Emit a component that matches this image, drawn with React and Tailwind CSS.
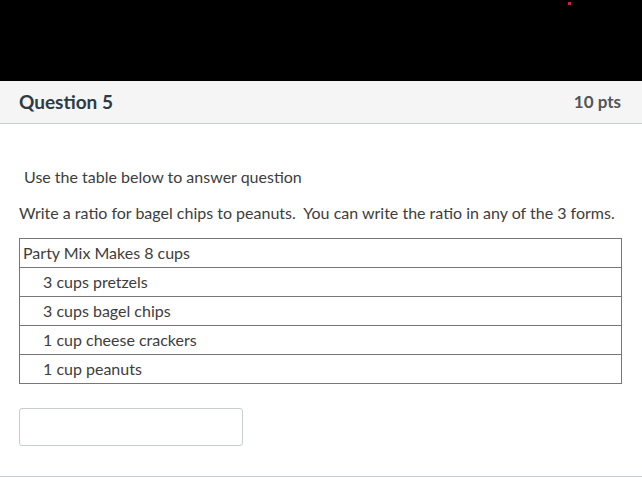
export default function App() {
  const rows = [
    "3 cups pretzels",
    "3 cups bagel chips",
    "1 cup cheese crackers",
    "1 cup peanuts",
  ];

  return (
    <div
      className="h-[477px] w-[642px] overflow-hidden bg-white text-[#3d3d3d]"
      style={{ fontFamily: "Lato, 'Open Sans', sans-serif" }}
    >
      <div className="relative h-[81px] bg-black">
        <span className="absolute left-[568px] top-[2px] h-[3px] w-[3px] bg-[#c0283c]" />
      </div>

      <div className="flex h-[43px] items-center justify-between border-b border-[#c7cdd1] bg-[#f5f5f5] pl-[19px] pr-[21px]">
        <h2 className="text-[19px] font-bold leading-[22px] text-[#2d3b45]">
          Question 5
        </h2>
        <span className="text-[17px] font-bold leading-[22px] text-[#505659]">
          10 pts
        </span>
      </div>

      <div className="px-[19px] pt-[43px]">
        <p className="pl-[5px] text-[16px] leading-[20px]">
          Use the table below to answer question
        </p>
        <p className="mt-[16px] text-[16px] leading-[20px]">
          Write a ratio for bagel chips to peanuts.&nbsp; You can write the ratio
          in any of the 3 forms.
        </p>

        <table className="mt-[15px] w-[603px] border-collapse text-[16px]">
          <tbody>
            <tr>
              <td className="h-[29px] border border-[#777] px-[3px] leading-[20px]">
                Party Mix Makes 8 cups
              </td>
            </tr>
            {rows.map((r) => (
              <tr key={r}>
                <td className="h-[29px] border border-[#777] pl-[23px] leading-[20px]">
                  {r}
                </td>
              </tr>
            ))}
          </tbody>
        </table>

        <input
          type="text"
          className="mt-[24px] block h-[38px] w-[224px] rounded-[3px] border border-[#c7cdd1] bg-white"
        />
      </div>

      <div className="mt-[30px] border-t border-[#c7cdd1]" />
    </div>
  );
}
